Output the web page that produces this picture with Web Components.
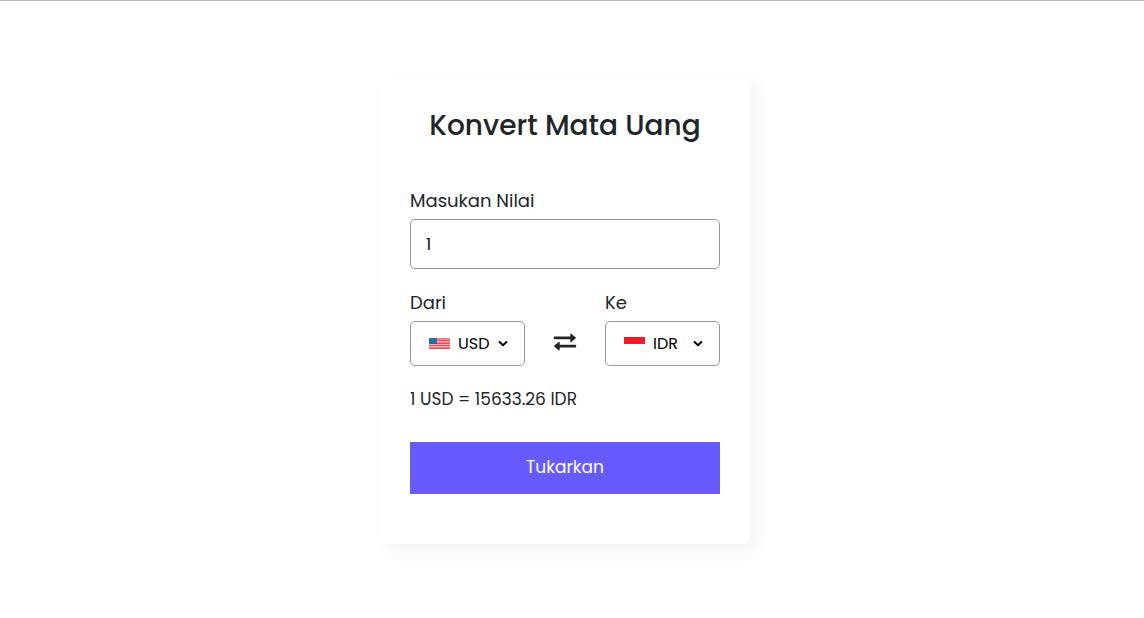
<!DOCTYPE html>
<html lang="id">
<head>
<meta charset="utf-8">
<meta name="viewport" content="width=device-width, initial-scale=1">
<title>Konvert Mata Uang</title>
<style>
  * { box-sizing: border-box; }
  body { margin: 0; font-family: Poppins, Inter, "Open Sans", sans-serif; font-size: 18px; color: #212529; background: #fff; }
</style>
</head>
<body>
<currency-page>
  <converter-card>
    <amount-field label="Masukan Nilai" value="1"></amount-field>
    <currency-row>
      <currency-select slot="from" label="Dari" value="USD"></currency-select>
      <swap-icon slot="swap"></swap-icon>
      <currency-select slot="to" label="Ke" value="IDR"></currency-select>
    </currency-row>
  </converter-card>
</currency-page>
<script>
class Base extends HTMLElement {
  constructor() {
    super();
    this.attachShadow({ mode: 'open' });
  }
  connectedCallback() {
    this.shadowRoot.innerHTML = '<style>*{box-sizing:border-box}:host{display:block}</style>' + this.render();
  }
}

customElements.define('currency-page', class extends Base {
  render() {
    return `<style>
      :host { min-height: 100vh; border-top: 1px solid #c4b5b0; padding-right: 14px; display: grid; place-items: center; }
    </style><slot></slot>`;
  }
});

customElements.define('converter-card', class extends Base {
  render() {
    return `<style>
      :host { width: 100%; max-width: 370px; padding: 30px 30px 50px; border-radius: 7px; background: #fff; box-shadow: 7px 7px 20px rgba(0,0,0,.05); }
      h1 { margin: 0; font-size: 28px; line-height: 42px; font-weight: 500; text-align: center; white-space: nowrap; }
      form { margin: 40px 0 0; }
      output { display: block; margin: 20px 0 30px; font-size: 17px; line-height: 26px; }
      button { display: block; width: 100%; height: 52px; padding: 0 0 2px; border: 0; background: #675afe; color: #fff; font: inherit; font-size: 17px; cursor: pointer; }
    </style>
    <h1>Konvert Mata Uang</h1>
    <form>
      <slot></slot>
      <output>1 USD = 15633.26 IDR</output>
      <button type="button">Tukarkan</button>
    </form>`;
  }
});

customElements.define('amount-field', class extends Base {
  render() {
    return `<style>
      label { display: block; line-height: 27px; margin-bottom: 5px; }
      input { display: block; width: 100%; height: 50px; padding: 0 15px; border: 1px solid #999; border-radius: 5px; background: #fff; font: inherit; font-size: 16px; color: #000; outline: none; }
    </style>
    <label for="amount">${this.getAttribute('label')}</label>
    <input id="amount" type="text" inputmode="decimal" value="${this.getAttribute('value')}">`;
  }
});

customElements.define('currency-row', class extends Base {
  render() {
    return `<style>
      :host { display: flex; justify-content: space-between; align-items: flex-end; margin-top: 20px; }
    </style>
    <slot name="from"></slot><slot name="swap"></slot><slot name="to"></slot>`;
  }
});

customElements.define('swap-icon', class extends Base {
  render() {
    return `<style>
      :host { display: flex; align-items: center; height: 45px; padding-bottom: 3px; }
      svg { display: block; }
    </style>
    <svg width="24" height="18" viewBox="0 0 24 18" fill="#212529" aria-hidden="true">
      <path d="M1.7 3.5H17.3V1.3Q17.3 0 18.3.8L22.6 4.3Q23.2 4.9 22.6 5.5L18.3 9Q17.3 9.7 17.3 8.4V6.2H1.7Q.8 6.2.8 5.3V4.4Q.8 3.5 1.7 3.5Z"/>
      <path d="M22.3 11.7H6.7V9.5Q6.7 8.2 5.7 9L1.4 12.5Q.8 13.1 1.4 13.7L5.7 17.2Q6.7 17.9 6.7 16.6V14.4H22.3Q23.2 14.4 23.2 13.5V12.6Q23.2 11.7 22.3 11.7Z"/>
    </svg>`;
  }
});

const FLAGS = {
  USD: `<path fill="#f87f88" d="M0 1h21v11H0z"/><path fill="#fbb0b5" d="M0 4h21v1H0zM0 7h21v1H0zM0 9h21v1H0z"/>
    <path fill="#ef4a55" d="M0 3h21v1H0zM0 6h21v1H0zM0 8h21v1H0zM0 11h21v1H0z"/><path fill="#2270b5" d="M0 1h8v6H0z"/>`,
  IDR: '<path fill="#fff" d="M0 0h21v14H0z"/><path fill="#ee1c25" d="M0 0h21v7H0z"/>'
};

customElements.define('currency-select', class extends Base {
  render() {
    const value = this.getAttribute('value');
    const options = Object.keys(FLAGS).map(c => `<option${c === value ? ' selected' : ''}>${c}</option>`).join('');
    return `<style>
      :host { width: 115px; }
      label { display: block; line-height: 27px; margin-bottom: 5px; }
      .box { display: grid; grid-template-columns: 21px 1fr 12px; column-gap: 8px; align-items: center; height: 45px; padding: 0 15px 0 18px; border: 1px solid #999; border-radius: 5px; }
      svg { display: block; }
      select { grid-area: 1 / 2 / 2 / 4; width: 100%; height: 43px; padding: 0; border: 0; background: none; appearance: none; font: inherit; font-size: 16px; color: #000; outline: none; }
      .arrow { grid-area: 1 / 3; pointer-events: none; }
    </style>
    <label for="code">${this.getAttribute('label')}</label>
    <div class="box">
      <svg width="21" height="14" viewBox="0 0 21 14" aria-hidden="true">${FLAGS[value]}</svg>
      <select id="code">${options}</select>
      <svg class="arrow" width="12" height="8" viewBox="0 0 12 8" fill="none" stroke="#000" stroke-width="2" aria-hidden="true"><path d="M2 1.5L6 5.2L10 1.5"/></svg>
    </div>`;
  }
});
</script>
</body>
</html>
